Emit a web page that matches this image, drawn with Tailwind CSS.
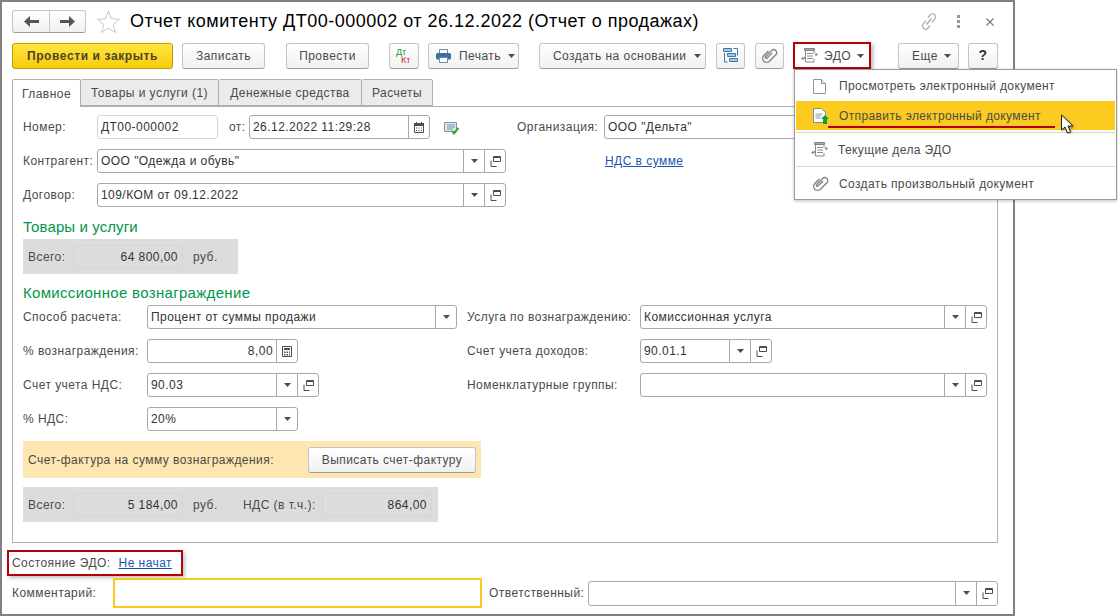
<!DOCTYPE html>
<html lang="ru">
<head>
<meta charset="utf-8">
<script src="https://cdn.jsdelivr.net/npm/@tailwindcss/browser@4"></script>
</head>
<body class="bg-white">
<svg class="hidden">
  <symbol id="arr" viewBox="0 0 7 4"><path d="M0 0h7L3.5 4z" fill="#4d4d4d"/></symbol>
  <symbol id="open" viewBox="0 0 11 11"><path d="M3.5.5h7v5h-7z M3.5 1.5h7" fill="none" stroke="#4d4d4d"/><path d="M1 4.5v6h5.500" fill="none" stroke="#4d4d4d"/></symbol>
  <symbol id="edo" viewBox="0 0 17 16"><path d="M3.500 .5h10v2h-10z" fill="#a8a8a8" stroke="#858585"/><path d="M4.500 2.500v11.500h8.500v-3M13 2.500v3M6 5.500h6M6 8h6M6 10.500h6" fill="none" stroke="#8c8c8c"/><path d="M3 9v1h-0.500v-1.500L0 10.500 2.500 12.500V11H4V9zM14 7V6h.5V4.500L17 6.500 14.500 8.500V7z" fill="#8c8c8c"/></symbol>
  <symbol id="clip" viewBox="0 0 17 17"><g transform="rotate(45 8.500 8.500)"><path d="M4.500 6v6.500a4 4 0 0 0 8 0V3.500a3 3 0 0 0-6 0v8.500a1 1 0 0 0 2 0V5" fill="none" stroke="#858585" stroke-width="1.400"/></g></symbol>
</svg>
<div class="relative w-[1118px] h-[616px] overflow-hidden font-['Liberation_Sans',Arial,sans-serif] text-[12px] tracking-[0.45px] text-[#4a4a4a]">
  <div class="w-[1015px] h-[616px] border-2 border-[#808080] bg-white">

    <!-- header -->
    <div class="flex items-center h-[23px] mt-[8px] ml-[10px] mr-[13px]">
      <div class="flex w-[74px] h-[23px] rounded-[3px] border border-[#c4c4c4] border-b-[#9c9c9c] bg-gradient-to-b from-white to-[#f1f1f1]">
        <div class="w-[37px] flex items-center justify-center border-r border-[#c8c8c8]">
          <svg width="15" height="11" viewBox="0 0 15 11"><path d="M0 5.500L6 0v4h9v3H6v4z" fill="#555"/></svg>
        </div>
        <div class="flex-1 flex items-center justify-center">
          <svg width="15" height="11" viewBox="0 0 15 11"><path d="M15 5.500L9 0v4H0v3h9v4z" fill="#555"/></svg>
        </div>
      </div>
      <svg class="ml-[11px]" width="23" height="23" viewBox="0 0 23 23"><path d="M11.500 1l3 7.800 8 .5-6.200 5.200 2 8-6.800-4.400-6.800 4.400 2-8L.5 9.300l8-.5z" fill="#fff" stroke="#c8c8c8"/></svg>
      <div class="ml-[10px] text-[18px] tracking-[0.49px] text-black whitespace-nowrap">Отчет комитенту ДТ00-000002 от 26.12.2022 (Отчет о продажах)</div>
      <div class="ml-auto flex items-center">
        <svg width="16" height="17" viewBox="0 0 16 17"><path d="M7 4.500l2.500-3c1.500-1.500 5-.5 5 2.500 0 1-.5 1.500-1 2.300l-2.500 3M9 12.500l-2.500 3c-1.500 1.500-5 .5-5-2.500 0-1 .5-1.500 1-2.300l2.500-3M5.500 11.500l5-6" fill="none" stroke="#a8a8a8" stroke-width="1.200"/></svg>
        <svg class="ml-[20px]" width="3" height="13" viewBox="0 0 3 13"><path d="M0 0h3v3H0zM0 5h3v3H0zM0 10h3v3H0z" fill="#999"/></svg>
        <svg class="ml-[26px] mr-[6px]" width="8" height="8" viewBox="0 0 8 8"><path d="M.5.5l7 7M7.500.5l-7 7" stroke="#777" stroke-width="1.100"/></svg>
      </div>
    </div>

    <!-- toolbar -->
    <div class="flex items-center h-[27px] mt-[9px] ml-[10px]">
      <div class="w-[161px] h-[26px] flex items-center justify-center rounded-[3px] border border-[#b8a000] bg-gradient-to-b from-[#ffe63c] to-[#f7cc00] font-bold text-[#4d4526] tracking-[0.6px]">Провести и закрыть</div>
      <div class="ml-[9px] w-[83px] h-[26px] flex items-center justify-center rounded-[3px] border border-[#c4c4c4] border-b-[#9c9c9c] bg-gradient-to-b from-white to-[#f1f1f1]">Записать</div>
      <div class="ml-[21px] w-[83px] h-[26px] flex items-center justify-center rounded-[3px] border border-[#c4c4c4] border-b-[#9c9c9c] bg-gradient-to-b from-white to-[#f1f1f1]">Провести</div>
      <div class="ml-[20px] w-[30px] h-[26px] flex flex-col justify-center pl-[6px] rounded-[3px] border border-[#c4c4c4] border-b-[#9c9c9c] bg-gradient-to-b from-white to-[#f1f1f1] text-[9px] leading-[8px] tracking-normal">
        <span class="text-[#159a3c]">Дт</span><span class="ml-[5px] text-[#e02020]">Кт</span>
      </div>
      <div class="ml-[9px] w-[91px] h-[26px] flex items-center pl-[7px] rounded-[3px] border border-[#c4c4c4] border-b-[#9c9c9c] bg-gradient-to-b from-white to-[#f1f1f1]">
        <svg width="15" height="14" viewBox="0 0 15 14"><path d="M3.500 .5h8v4h-8z" fill="#fff" stroke="#6d8aa5"/><rect y="4" width="15" height="6.500" rx="1.500" fill="#3f6f9e"/><path d="M3.500 8.500h8v5h-8z" fill="#fff" stroke="#6d8aa5"/></svg>
        <span class="ml-[8px]">Печать</span>
        <svg class="ml-[7px]" width="7" height="4"><use href="#arr"/></svg>
      </div>
      <div class="ml-[20px] w-[167px] h-[26px] flex items-center pl-[13px] rounded-[3px] border border-[#c4c4c4] border-b-[#9c9c9c] bg-gradient-to-b from-white to-[#f1f1f1] whitespace-nowrap">
        <span>Создать на основании</span>
        <svg class="ml-[7px]" width="7" height="4"><use href="#arr"/></svg>
      </div>
      <div class="ml-[10px] w-[29px] h-[26px] flex items-center justify-center rounded-[3px] border border-[#c4c4c4] border-b-[#9c9c9c] bg-gradient-to-b from-white to-[#f1f1f1]">
        <svg width="15" height="15" viewBox="0 0 15 15"><path d="M.5.5h8v3h-8zM4.500 5.500h8v3h-8zM6.500 10.500h8v3h-8z" fill="#a9c8e0" stroke="#3f7cac"/><path d="M1.500 5v9h3M10.500 .5h4v7" fill="none" stroke="#3f7cac"/></svg>
      </div>
      <div class="ml-[10px] w-[29px] h-[26px] flex items-center justify-center rounded-[3px] border border-[#c4c4c4] border-b-[#9c9c9c] bg-gradient-to-b from-white to-[#f1f1f1]">
        <svg width="17" height="17"><use href="#clip"/></svg>
      </div>
      <div class="ml-[9px] w-[78px] h-[27px] flex items-center pl-[6px] border-2 border-[#b4000a] bg-white shadow-[2px_2px_4px_rgba(0,0,0,0.3)]">
        <svg width="17" height="16"><use href="#edo"/></svg>
        <span class="ml-[6px]">ЭДО</span>
        <svg class="ml-[6px]" width="7" height="4"><use href="#arr"/></svg>
      </div>
      <div class="ml-[27px] w-[61px] h-[26px] flex items-center pl-[13px] rounded-[3px] border border-[#c4c4c4] border-b-[#9c9c9c] bg-gradient-to-b from-white to-[#f1f1f1]">
        <span>Еще</span>
        <svg class="ml-[6px]" width="7" height="4"><use href="#arr"/></svg>
      </div>
      <div class="ml-[9px] w-[30px] h-[26px] flex items-center justify-center rounded-[3px] border border-[#c4c4c4] border-b-[#9c9c9c] bg-gradient-to-b from-white to-[#f1f1f1] font-bold text-[14px] text-[#333]">?</div>
    </div>

    <!-- tabs -->
    <div class="flex h-[28px] mt-[10px] ml-[10px] relative z-10">
      <div class="w-[69px] h-[28px] flex items-center justify-center bg-white border border-b-0 border-[#b0b0b0] rounded-t-[2px]">Главное</div>
      <div class="w-[138px] h-[27px] flex items-center justify-center bg-[#ebebeb] border border-l-0 border-[#b0b0b0] rounded-t-[2px]">Товары и услуги (1)</div>
      <div class="w-[143px] h-[27px] flex items-center justify-center bg-[#ebebeb] border border-l-0 border-[#b0b0b0] rounded-t-[2px]">Денежные средства</div>
      <div class="w-[71px] h-[27px] flex items-center justify-center bg-[#ebebeb] border border-l-0 border-[#b0b0b0] rounded-t-[2px]">Расчеты</div>
    </div>

    <!-- panel -->
    <div class="ml-[10px] w-[986px] h-[437px] -mt-px border border-[#b0b0b0] pt-[8px] pl-[10px]">
      <div class="flex items-center h-[24px]">
        <div class="w-[74px]">Номер:</div>
        <div class="w-[121px] h-[24px] border border-[#d6d6d6] rounded-[3px] px-[3px] leading-[22px] text-[#333]">ДТ00-000002</div>
        <div class="ml-[11px] w-[20px]">от:</div>
        <div class="flex w-[181px] h-[24px] border border-[#a8a8a8] rounded-[3px]">
          <div class="flex-1 px-[3px] leading-[22px] text-[#333]">26.12.2022 11:29:28</div>
          <div class="w-[21px] border-l border-[#a8a8a8] flex items-center justify-center">
            <svg width="10" height="11" viewBox="0 0 10 11"><path d="M.5 1.500h9v9h-9z" fill="#fff" stroke="#4d4d4d"/><path d="M0 1h10v3H0zM2 0h1v2H2zM7 0h1v2H7z" fill="#4d4d4d"/><path d="M2 5.500h1v1H2zM4.500 5.500h1v1h-1zM7 5.500h1v1H7zM2 8h1v1H2zM4.500 8h1v1h-1zM7 8h1v1H7z" fill="#4d4d4d"/></svg>
          </div>
        </div>
        <svg class="ml-[14px] mt-[2px]" width="15" height="13" viewBox="0 0 15 13"><path d="M.5.5h12v9H.5z" fill="#dfe7ee" stroke="#7d93a8"/><path d="M3 3h8M3 5h8M3 7h6" stroke="#7d93a8"/><path d="M8 9l2 2.500L14.500 6" fill="none" stroke="#3aa53a" stroke-width="2"/></svg>
        <div class="ml-[58px] w-[87px] whitespace-nowrap">Организация:</div>
        <div class="flex w-[383px] h-[24px] border border-[#a8a8a8] rounded-[3px]">
          <div class="flex-1 px-[3px] leading-[22px] text-[#333]">ООО "Дельта"</div>
        </div>
      </div>

      <div class="flex items-center h-[24px] mt-[10px]">
        <div class="w-[74px]">Контрагент:</div>
        <div class="flex w-[409px] h-[24px] border border-[#a8a8a8] rounded-[3px]">
          <div class="flex-1 px-[3px] leading-[22px] text-[#333]">ООО "Одежда и обувь"</div>
          <div class="w-[21px] border-l border-[#a8a8a8] flex items-center justify-center"><svg width="7" height="4"><use href="#arr"/></svg></div>
          <div class="w-[21px] border-l border-[#a8a8a8] flex items-center justify-center"><svg width="11" height="11"><use href="#open"/></svg></div>
        </div>
        <a class="ml-[99px] text-[#1a55b0] underline whitespace-nowrap">НДС в сумме</a>
      </div>

      <div class="flex items-center h-[24px] mt-[10px]">
        <div class="w-[74px]">Договор:</div>
        <div class="flex w-[409px] h-[24px] border border-[#a8a8a8] rounded-[3px]">
          <div class="flex-1 px-[3px] leading-[22px] text-[#333]">109/КОМ от 09.12.2022</div>
          <div class="w-[21px] border-l border-[#a8a8a8] flex items-center justify-center"><svg width="7" height="4"><use href="#arr"/></svg></div>
          <div class="w-[21px] border-l border-[#a8a8a8] flex items-center justify-center"><svg width="11" height="11"><use href="#open"/></svg></div>
        </div>
      </div>

      <div class="h-[32px] pt-[9px] text-[15px] leading-[22px] tracking-[0.1px] text-[#00964a]">Товары и услуги</div>
      <div class="flex items-center w-[215px] h-[35px] bg-[#dcdcdc] pl-[5px]">
        <div class="w-[45px]">Всего:</div>
        <div class="w-[110px] h-[24px] border border-[#d4d4d4] rounded-[3px] text-right pr-[4px] leading-[22px] text-[#333]">64 800,00</div>
        <div class="ml-[10px]">руб.</div>
      </div>

      <div class="h-[31px] pt-[8px] text-[15px] leading-[22px] tracking-[0.32px] text-[#00964a]">Комиссионное вознаграждение</div>

      <div class="flex items-center h-[24px]">
        <div class="w-[124px]">Способ расчета:</div>
        <div class="flex w-[310px] h-[24px] border border-[#a8a8a8] rounded-[3px]">
          <div class="flex-1 px-[3px] leading-[22px] text-[#333]">Процент от суммы продажи</div>
          <div class="w-[21px] border-l border-[#a8a8a8] flex items-center justify-center"><svg width="7" height="4"><use href="#arr"/></svg></div>
        </div>
        <div class="ml-[10px] w-[173px] whitespace-nowrap">Услуга по вознаграждению:</div>
        <div class="flex w-[347px] h-[24px] border border-[#a8a8a8] rounded-[3px]">
          <div class="flex-1 px-[3px] leading-[22px] text-[#333]">Комиссионная услуга</div>
          <div class="w-[21px] border-l border-[#a8a8a8] flex items-center justify-center"><svg width="7" height="4"><use href="#arr"/></svg></div>
          <div class="w-[21px] border-l border-[#a8a8a8] flex items-center justify-center"><svg width="11" height="11"><use href="#open"/></svg></div>
        </div>
      </div>

      <div class="flex items-center h-[24px] mt-[10px]">
        <div class="w-[124px]">% вознаграждения:</div>
        <div class="flex w-[151px] h-[24px] border border-[#a8a8a8] rounded-[3px]">
          <div class="flex-1 px-[3px] text-right leading-[22px] text-[#333]">8,00</div>
          <div class="w-[21px] border-l border-[#a8a8a8] flex items-center justify-center">
            <svg width="10" height="11" viewBox="0 0 10 11"><path d="M.5.5h9v10h-9z" fill="#fff" stroke="#4d4d4d"/><path d="M2 2h6v2H2zM2 5.500h1.500V7H2zM4.500 5.500H6V7H4.500zM7 5.500h1V7H7zM2 8h1.500v1.500H2zM4.500 8H6v1.500H4.500zM7 8h1v1.500H7z" fill="#4d4d4d"/></svg>
          </div>
        </div>
        <div class="ml-[169px] w-[173px] whitespace-nowrap">Счет учета доходов:</div>
        <div class="flex w-[132px] h-[24px] border border-[#a8a8a8] rounded-[3px]">
          <div class="flex-1 px-[3px] leading-[22px] text-[#333]">90.01.1</div>
          <div class="w-[21px] border-l border-[#a8a8a8] flex items-center justify-center"><svg width="7" height="4"><use href="#arr"/></svg></div>
          <div class="w-[21px] border-l border-[#a8a8a8] flex items-center justify-center"><svg width="11" height="11"><use href="#open"/></svg></div>
        </div>
      </div>

      <div class="flex items-center h-[24px] mt-[10px]">
        <div class="w-[124px]">Счет учета НДС:</div>
        <div class="flex w-[172px] h-[24px] border border-[#a8a8a8] rounded-[3px]">
          <div class="flex-1 px-[3px] leading-[22px] text-[#333]">90.03</div>
          <div class="w-[21px] border-l border-[#a8a8a8] flex items-center justify-center"><svg width="7" height="4"><use href="#arr"/></svg></div>
          <div class="w-[21px] border-l border-[#a8a8a8] flex items-center justify-center"><svg width="11" height="11"><use href="#open"/></svg></div>
        </div>
        <div class="ml-[148px] w-[173px] whitespace-nowrap">Номенклатурные группы:</div>
        <div class="flex w-[347px] h-[24px] border border-[#a8a8a8] rounded-[3px]">
          <div class="flex-1"></div>
          <div class="w-[21px] border-l border-[#a8a8a8] flex items-center justify-center"><svg width="7" height="4"><use href="#arr"/></svg></div>
          <div class="w-[21px] border-l border-[#a8a8a8] flex items-center justify-center"><svg width="11" height="11"><use href="#open"/></svg></div>
        </div>
      </div>

      <div class="flex items-center h-[24px] mt-[10px]">
        <div class="w-[124px]">% НДС:</div>
        <div class="flex w-[151px] h-[24px] border border-[#a8a8a8] rounded-[3px]">
          <div class="flex-1 px-[3px] leading-[22px] text-[#333]">20%</div>
          <div class="w-[21px] border-l border-[#a8a8a8] flex items-center justify-center"><svg width="7" height="4"><use href="#arr"/></svg></div>
        </div>
      </div>

      <div class="flex items-center w-[458px] h-[37px] mt-[10px] bg-[#fee6b0] pl-[5px]">
        <div class="w-[280px] whitespace-nowrap">Счет-фактура на сумму вознаграждения:</div>
        <div class="w-[168px] h-[26px] flex items-center justify-center rounded-[3px] border border-[#c4c4c4] border-b-[#9c9c9c] bg-gradient-to-b from-white to-[#f1f1f1]">Выписать счет-фактуру</div>
      </div>

      <div class="flex items-center w-[415px] h-[35px] mt-[9px] bg-[#dcdcdc] pl-[5px]">
        <div class="w-[45px]">Всего:</div>
        <div class="w-[110px] h-[24px] border border-[#d4d4d4] rounded-[3px] text-right pr-[4px] leading-[22px] text-[#333]">5 184,00</div>
        <div class="ml-[10px] w-[50px]">руб.</div>
        <div class="w-[79px] whitespace-nowrap">НДС (в т.ч.):</div>
        <div class="w-[110px] h-[24px] border border-[#d4d4d4] rounded-[3px] text-right pr-[4px] leading-[22px] text-[#333]">864,00</div>
      </div>
    </div>

    <!-- footer -->
    <div class="ml-[5px] mt-[7px] flex items-center w-[176px] h-[26px] border-2 border-[#b4000a] pl-[3px] bg-white shadow-[2px_2px_4px_rgba(0,0,0,0.25)] whitespace-nowrap">
      <span>Состояние ЭДО:</span>
      <a class="ml-[8px] text-[#1a55b0] underline">Не начат</a>
    </div>
    <div class="flex items-center h-[30px] mt-[2px] ml-[10px]">
      <div class="w-[101px]">Комментарий:</div>
      <div class="w-[369px] h-[30px] border-2 border-[#fbc91e] bg-white"></div>
      <div class="ml-[7px] w-[99px] whitespace-nowrap">Ответственный:</div>
      <div class="flex w-[410px] h-[25px] border border-[#a8a8a8] rounded-[3px]">
        <div class="flex-1"></div>
        <div class="w-[21px] border-l border-[#a8a8a8] flex items-center justify-center"><svg width="7" height="4"><use href="#arr"/></svg></div>
        <div class="w-[21px] border-l border-[#a8a8a8] flex items-center justify-center"><svg width="11" height="11"><use href="#open"/></svg></div>
      </div>
    </div>
  </div>

  <!-- dropdown menu -->
  <div class="absolute left-[794px] top-[69px] w-[323px] h-[131px] bg-white border border-[#9a9a9a] shadow-[0_1px_3px_rgba(0,0,0,0.25)] p-px tracking-[0.38px]">
    <div class="flex items-center h-[30px] pl-[17px]">
      <svg width="13" height="15" viewBox="0 0 13 15"><path d="M.5.5h8l4 4v10H.5z" fill="#fff" stroke="#8a97a3"/><path d="M8.500.5v4h4" fill="#e6e9ec" stroke="#8a97a3"/></svg>
      <span class="ml-[13px]">Просмотреть электронный документ</span>
    </div>
    <div class="flex items-center h-[29px] pl-[17px] bg-[#fbcb20]">
      <svg width="16" height="16" viewBox="0 0 16 16"><path d="M.5.5h8l4 4v10H.5z" fill="#fff" stroke="#7f8d99"/><path d="M2.500 6h7M2.500 8h6M2.500 10h5" stroke="#8a97a3"/><path d="M12 7l4 4h-2v5h-4v-5H8z" fill="#12a02c"/></svg>
      <span class="ml-[10px]">Отправить электронный документ</span>
    </div>
    <div class="h-[3px] border-b border-[#ddd6c0]"></div>
    <div class="flex items-center h-[33px] pl-[15px]">
      <svg width="17" height="16"><use href="#edo"/></svg>
      <span class="ml-[10px]">Текущие дела ЭДО</span>
    </div>
    <div class="h-px bg-[#ddd6c0]"></div>
    <div class="flex items-center h-[33px] pl-[16px]">
      <svg width="17" height="17"><use href="#clip"/></svg>
      <span class="ml-[10px]">Создать произвольный документ</span>
    </div>
  </div>
  <div class="absolute left-[828px] top-[126px] w-[227px] h-[2px] bg-[#b4000a]"></div>
  <svg class="absolute left-[1060px] top-[114px]" width="16" height="20" viewBox="0 0 16 20"><path d="M1.500 1v15l3.500-3 2.500 6 3-1.300-2.500-5.700H13z" fill="#fff" stroke="#222" style="filter:drop-shadow(1px 1px 1px rgba(0,0,0,.4))"/></svg>
</div>
</body>
</html>
